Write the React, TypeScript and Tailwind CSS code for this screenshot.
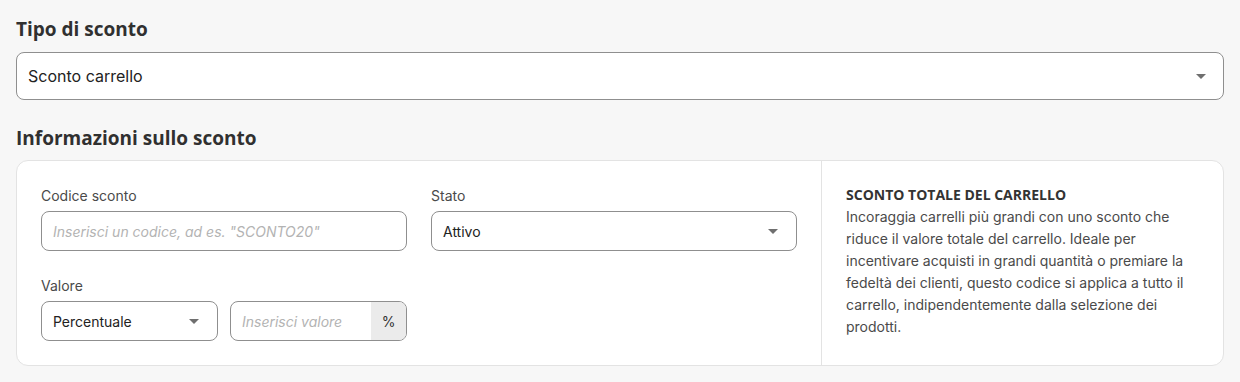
import React from "react";

const Caret = () => (
  <svg width="10" height="5" viewBox="0 0 10 5" className="shrink-0">
    <path d="M0 0 L5 5 L10 0 Z" fill="#6f6f6f" />
  </svg>
);

const heading = "font-['Open_Sans',sans-serif] font-bold text-[19px] leading-[28px] text-[#303030]";
const label = "text-[14px] leading-[22px] text-[#4a4a4a] mb-[4px]";
const box = "h-[40px] border border-[#8f8f8f] rounded-[8px] bg-white flex items-center min-w-0";

export default function App() {
  return (
    <div className="min-h-[382px] bg-[#f7f7f7] px-4 pt-[15px] font-['Inter',sans-serif]">
      <h2 className={heading}>Tipo di sconto</h2>
      <div className="mt-[9px] h-[48px] border border-[#8f8f8f] rounded-[8px] bg-white flex items-center justify-between pl-[11px] pr-[17px]">
        <span className="text-[16px] text-[#222]">Sconto carrello</span>
        <Caret />
      </div>

      <h2 className={heading + " mt-6"}>Informazioni sullo sconto</h2>
      <div className="mt-2 bg-white border border-[#e3e3e3] rounded-[12px] flex">
        <div className="w-[804px] p-6 grid grid-cols-2 gap-x-6 gap-y-6">
          <div className="flex flex-col min-w-0">
            <label className={label}>Codice sconto</label>
            <div className={box + " px-[11px]"}>
              <span className="text-[14px] italic text-[#b3b3b3] truncate">Inserisci un codice, ad es. "SCONTO20"</span>
            </div>
          </div>
          <div className="flex flex-col min-w-0">
            <label className={label}>Stato</label>
            <div className={box + " justify-between pl-[11px] pr-[18px]"}>
              <span className="text-[14px] text-[#222]">Attivo</span>
              <Caret />
            </div>
          </div>
          <div className="flex flex-col min-w-0">
            <label className={label}>Valore</label>
            <div className="grid grid-cols-2 gap-3">
              <div className={box + " justify-between pl-[11px] pr-[18px]"}>
                <span className="text-[14px] text-[#222]">Percentuale</span>
                <Caret />
              </div>
              <div className={box + " overflow-hidden"}>
                <span className="flex-1 min-w-0 pl-[11px] text-[14px] italic text-[#b3b3b3] truncate">Inserisci valore</span>
                <span className="w-[35px] shrink-0 h-full bg-[#ebebeb] flex items-center justify-center text-[14px] text-[#333]">%</span>
              </div>
            </div>
          </div>
        </div>
        <div className="flex-1 border-l border-[#e3e3e3] p-6">
          <p className="font-['Open_Sans',sans-serif] font-bold text-[14px] leading-[20px] text-[#333] uppercase">Sconto totale del carrello</p>
          <p className="text-[14px] leading-[22px] text-[#4a4a4a] mt-[1px]">
            Incoraggia carrelli più grandi con uno sconto che riduce il valore totale del carrello. Ideale per incentivare acquisti in grandi quantità o premiare la fedeltà dei clienti, questo codice si applica a tutto il carrello, indipendentemente dalla selezione dei prodotti.
          </p>
        </div>
      </div>
    </div>
  );
}
